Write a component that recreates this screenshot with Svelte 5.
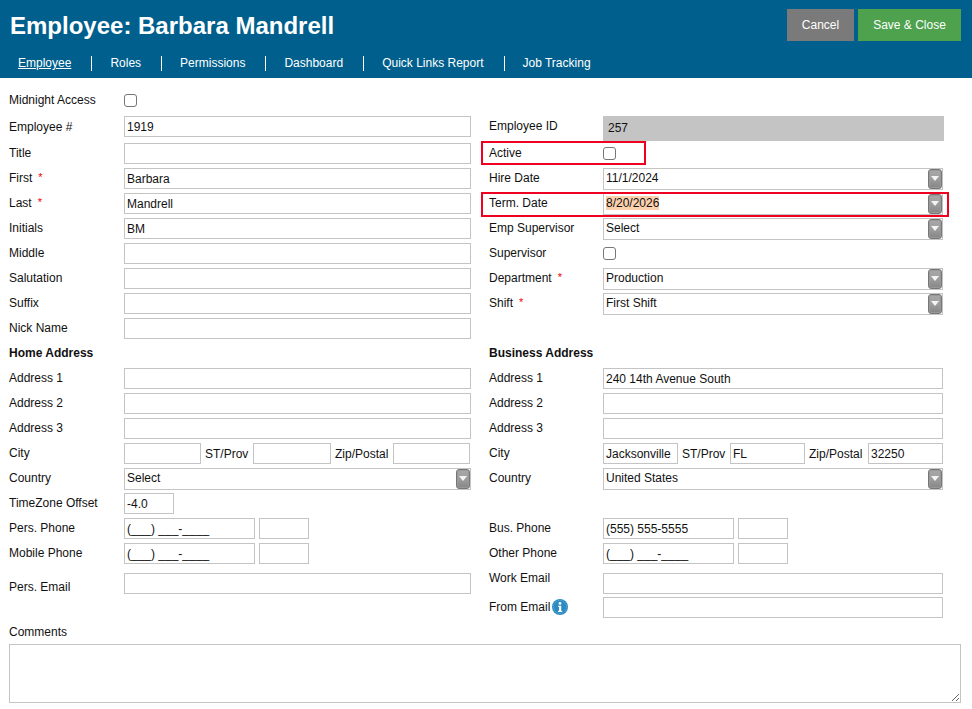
<script>
	const tabs = ['Employee', 'Roles', 'Permissions', 'Dashboard', 'Quick Links Report', 'Job Tracking'];
</script>

{#snippet label(text, required = false)}
	<span class="label">{text}{#if required}<span class="req">*</span>{/if}</span>
{/snippet}

{#snippet text(name, value = '', required = false)}
	<div class="row">
		{@render label(name, required)}
		<input class="input" type="text" {value} />
	</div>
{/snippet}

{#snippet check(name)}
	<div class="row">
		{@render label(name)}
		<input class="check" type="checkbox" />
	</div>
{/snippet}

{#snippet arrow()}
	<span class="arrow"><i></i></span>
{/snippet}

{#snippet combo(name, value, required = false)}
	<div class="row">
		{@render label(name, required)}
		<div class="combo"><span>{value}</span>{@render arrow()}</div>
	</div>
{/snippet}

{#snippet phone(name, value)}
	<div class="row">
		{@render label(name)}
		<input class="input phone" type="text" {value} />
		<input class="input ext" type="text" />
	</div>
{/snippet}

<header class="top">
	<div class="title-bar">
		<h1>Employee: Barbara Mandrell</h1>
		<div class="actions">
			<button class="btn cancel">Cancel</button>
			<button class="btn save">Save &amp; Close</button>
		</div>
	</div>
	<nav class="tabs">
		{#each tabs as tab, i}
			<a href="#{i}" class:active={i === 0}>{tab}</a>
		{/each}
	</nav>
</header>

<main class="form">
	<section class="col left">
		{@render check('Midnight Access')}
		{@render text('Employee #', '1919')}
		{@render text('Title')}
		{@render text('First', 'Barbara', true)}
		{@render text('Last', 'Mandrell', true)}
		{@render text('Initials', 'BM')}
		{@render text('Middle')}
		{@render text('Salutation')}
		{@render text('Suffix')}
		{@render text('Nick Name')}
		<div class="row"><span class="heading">Home Address</span></div>
		{@render text('Address 1')}
		{@render text('Address 2')}
		{@render text('Address 3')}
		<div class="row">
			{@render label('City')}
			<div class="inline">
				<input class="input" type="text" />
				<span class="st">ST/Prov</span>
				<input class="input mid" type="text" />
				<span class="zip">Zip/Postal</span>
				<input class="input" type="text" />
			</div>
		</div>
		{@render combo('Country', 'Select')}
		<div class="row">
			{@render label('TimeZone Offset')}
			<input class="input tz" type="text" value="-4.0" />
		</div>
		{@render phone('Pers. Phone', '(___) ___-____')}
		{@render phone('Mobile Phone', '(___) ___-____')}
		<div class="row pers-email">
			<span class="label low">Pers. Email</span>
			<input class="input" type="text" />
		</div>
	</section>

	<section class="col right">
		<div class="row id-row">
			<span class="label id-label">Employee ID</span>
			<div class="readonly">257</div>
		</div>
		<div class="flag-active">{@render check('Active')}</div>
		{@render combo('Hire Date', '11/1/2024')}
		<div class="row flag-term">
			{@render label('Term. Date')}
			<div class="combo"><span class="selected">8/20/2026</span>{@render arrow()}</div>
		</div>
		{@render combo('Emp Supervisor', 'Select')}
		{@render check('Supervisor')}
		{@render combo('Department', 'Production', true)}
		{@render combo('Shift', 'First Shift', true)}
		<div class="row"></div>
		<div class="row"><span class="heading">Business Address</span></div>
		{@render text('Address 1', '240 14th Avenue South')}
		{@render text('Address 2')}
		{@render text('Address 3')}
		<div class="row">
			{@render label('City')}
			<div class="inline biz">
				<input class="input" type="text" value="Jacksonville" />
				<span class="st">ST/Prov</span>
				<input class="input" type="text" value="FL" />
				<span class="zip">Zip/Postal</span>
				<input class="input" type="text" value="32250" />
			</div>
		</div>
		{@render combo('Country', 'United States')}
		<div class="row"></div>
		{@render phone('Bus. Phone', '(555) 555-5555')}
		{@render phone('Other Phone', '(___) ___-____')}
		<div class="row work-email">
			<span class="label high">Work Email</span>
			<input class="input" type="text" />
		</div>
		<div class="row from-email">
			<span class="label">From Email
				<svg class="info" viewBox="0 0 16 16" width="16" height="16" aria-hidden="true">
					<circle cx="8" cy="8" r="8" fill="#2b8ac2" />
					<circle cx="8" cy="8" r="6.6" fill="none" stroke="#8cc4e4" stroke-width="0.6" stroke-dasharray="1 0.8" />
					<circle cx="8" cy="4.4" r="1.4" fill="#fff" />
					<path d="M6.2 6.8h3v5h1v1.2H6v-1.2h1.1V8H6.2z" fill="#fff" />
				</svg>
			</span>
			<input class="input" type="text" />
		</div>
	</section>

	<section class="comments">
		<label for="comments">Comments</label>
		<textarea id="comments"></textarea>
	</section>
</main>

<style>
	:global(body) {
		background: #fff;
		font-family: 'Liberation Sans', Arial, sans-serif;
		font-size: 12px;
		color: #111;
	}

	.top {
		height: 78px;
		background: #005f8c;
		color: #fff;
		overflow: hidden;
	}

	.title-bar {
		display: flex;
		justify-content: space-between;
		height: 46px;
		padding: 9px 11px 0 10px;
		box-sizing: border-box;
	}

	h1 {
		margin: 0;
		font-size: 24px;
		line-height: 34px;
		font-weight: 700;
	}

	.actions {
		display: flex;
		gap: 4px;
	}

	.btn {
		height: 32px;
		border: 0;
		padding: 0;
		color: #fff;
		font: inherit;
	}

	.cancel {
		width: 67px;
		background: #7a7a7a;
	}

	.save {
		width: 103px;
		background: #4ea24e;
	}

	.tabs {
		display: flex;
		align-items: center;
		height: 15px;
		margin-top: 10px;
	}

	.tabs a {
		color: #fff;
		text-decoration: none;
		padding: 0 20px 0 18px;
		line-height: 15px;
		border-left: 1px solid #fff;
	}

	.tabs a:first-child {
		border-left: 0;
	}

	.tabs a.active {
		text-decoration: underline;
	}

	.form {
		display: grid;
		grid-template-columns: 480px 1fr;
		padding-top: 10px;
	}

	.col {
		display: flex;
		flex-direction: column;
	}

	.left {
		padding: 0 9px;
	}

	.right {
		padding: 28px 29px 0 9px;
	}

	.row {
		display: flex;
		align-items: center;
		height: 25px;
	}

	.left .row:nth-child(2) {
		margin: 1px 0 2px;
	}

	.label {
		flex: 0 0 115px;
		width: 115px;
		box-sizing: border-box;
		display: flex;
		align-items: center;
		padding-bottom: 2px;
	}

	.right .label {
		flex-basis: 114px;
		width: 114px;
	}

	/* Employee # sits on the input's centre line, the other labels a pixel above it */
	.left .row:nth-child(2) .label {
		padding-bottom: 0;
	}

	.req {
		color: #e00;
		margin-left: 6px;
		font-size: 11px;
		position: relative;
		top: -1px;
	}

	.heading {
		font-weight: 700;
		padding-bottom: 2px;
	}

	.input {
		flex: 1;
		min-width: 0;
		width: 100%;
		height: 21px;
		box-sizing: border-box;
		border: 1px solid #c4c4c4;
		background: #fff;
		padding: 0 2px;
		font: inherit;
		color: #111;
		outline: none;
		border-radius: 0;
	}

	.tz {
		flex: 0 0 50px;
		width: 50px;
	}

	.phone {
		flex: 0 0 131px;
		width: 131px;
	}

	.ext {
		flex: 0 0 50px;
		width: 50px;
		margin-left: 4px;
	}

	.check {
		appearance: none;
		width: 13px;
		height: 13px;
		margin: 0;
		border: 1px solid #767676;
		border-radius: 3px;
		background: #fff;
	}

	.combo {
		position: relative;
		flex: 1;
		height: 22px;
		box-sizing: border-box;
		border: 1px solid #c4c4c4;
		padding: 0 2px;
		line-height: 19px;
		white-space: nowrap;
	}

	.selected {
		background: #fdd0ae;
	}

	.arrow {
		position: absolute;
		top: 0;
		right: 0;
		width: 14px;
		height: 20px;
		box-sizing: border-box;
		border: 1px solid #777;
		border-radius: 3px;
		background: linear-gradient(#a8a8a8, #a0a0a0 45%, #858585);
		box-shadow: inset 0 0 0 1px #999;
		display: flex;
		align-items: center;
		justify-content: center;
	}

	.arrow i {
		width: 0;
		height: 0;
		border: 4px solid transparent;
		border-top: 5px solid #f4f4f4;
		border-bottom: 0;
	}

	.inline {
		flex: 1;
		display: flex;
		align-items: center;
	}

	.inline span {
		box-sizing: border-box;
		padding-left: 4px;
		white-space: nowrap;
	}

	.inline .st {
		flex: 0 0 52px;
		width: 52px;
	}

	.inline .zip {
		flex: 0 0 62px;
		width: 62px;
	}

	.inline .input {
		flex: 0 0 77px;
		width: 77px;
	}

	.inline .mid {
		flex: 0 0 78px;
		width: 78px;
	}

	.biz .zip {
		flex: 0 0 63px;
		width: 63px;
	}

	.biz .input {
		flex: 0 0 75px;
		width: 75px;
	}

	.readonly {
		flex: 1;
		align-self: stretch;
		margin-right: -1px;
		background: #c4c4c4;
		padding: 1px 5px 0;
		line-height: 23px;
	}

	.id-label {
		padding-bottom: 6px;
	}

	.flag-active,
	.flag-term {
		position: relative;
	}

	.flag-active::after,
	.flag-term::after {
		content: '';
		position: absolute;
		left: -8px;
		box-sizing: border-box;
		border: 2px solid #f00020;
	}

	.flag-active::after {
		top: 0;
		width: 165px;
		height: 24px;
	}

	.flag-term::after {
		top: 1px;
		width: 468px;
		height: 25px;
	}

	.pers-email {
		margin-top: 5px;
	}

	.low {
		padding: 6px 0 0;
	}

	.high {
		padding-bottom: 12px;
	}

	.work-email {
		margin-top: 5px;
	}

	.from-email {
		margin-top: -1px;
	}

	.info {
		margin-left: 2px;
	}

	.comments {
		grid-column: 1 / -1;
		padding: 0 11px 0 9px;
		margin-top: 5px;
	}

	.comments label {
		display: block;
		line-height: 15px;
		margin-bottom: 4px;
	}

	textarea {
		display: block;
		width: 100%;
		height: 59px;
		box-sizing: border-box;
		border: 1px solid #c4c4c4;
		outline: none;
		border-radius: 0;
		font: inherit;
		resize: vertical;
	}
</style>
